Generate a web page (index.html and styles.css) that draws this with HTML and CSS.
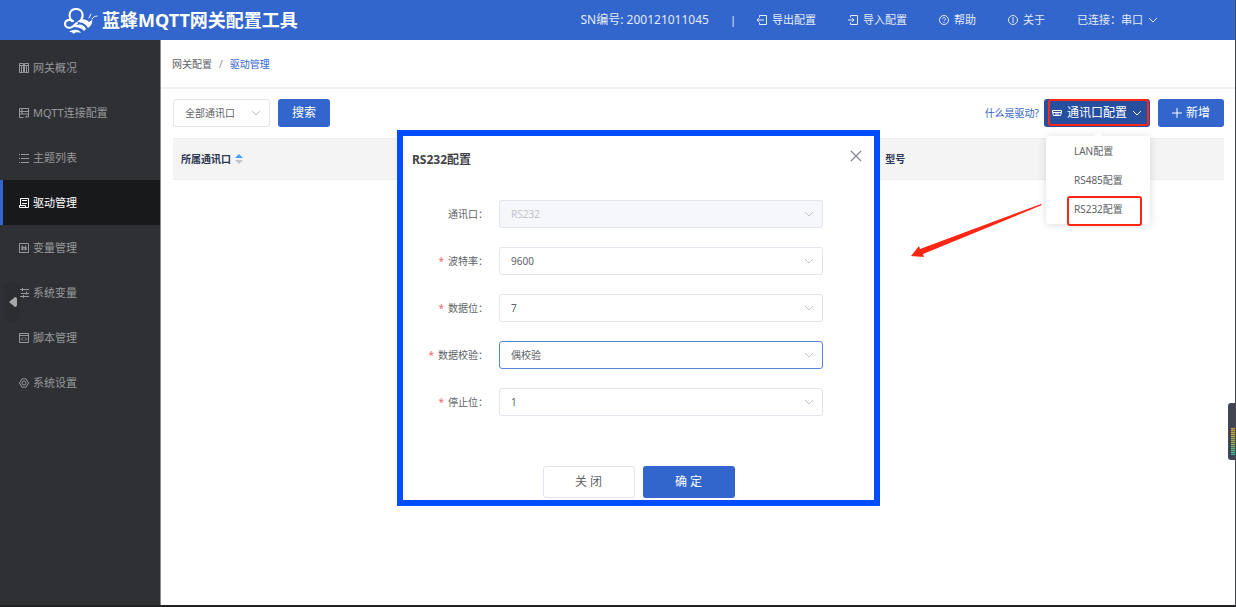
FILE: index.html
```html
<!DOCTYPE html>
<html lang="zh-CN">
<head>
<meta charset="utf-8">
<title>蓝蜂MQTT网关配置工具</title>
<link rel="stylesheet" href="styles.css">
</head>
<body>
<svg class="defs" aria-hidden="true">
  <symbol id="chevron" viewBox="0 0 10 6"><path d="M1 1l4 4 4-4" fill="none" stroke="currentColor"/></symbol>
</svg>
<header class="topbar">
  <div class="brand">
    <svg class="brand-logo" viewBox="0 0 36 28">
      <g fill="none" stroke="#fff" stroke-width="2" stroke-linecap="round">
        <path d="M9 15C5 11 6 3 13 3s8 7 5 11"/>
        <path d="M10 15C6 13 2 14 2 18c0 3 4 5 7 3 2-1 3-3 5-4"/>
        <path d="M26 12l2-4M29 13c1-2 3-3 5-3" stroke-width="1"/>
      </g>
      <g fill="#fff">
        <path d="M14 16c4-4 9-3 12 0 3-1 3-3 3-3 1 4-1 7-4 9-2-4-6-6-11-6z"/>
        <path d="M10 21c5-4 11-3 13 2l-2 2c-2-3-6-4-11-4z"/>
        <path d="M6 26c4-3 10-3 12 1-3-1-5-1-8 1 0-2-2-2-4-2z"/>
      </g>
    </svg>
    <h1 class="brand-name">蓝蜂MQTT网关配置工具</h1>
  </div>
  <nav class="topnav">
    <div class="topnav-serial">
      <span class="serial">SN编号: 200121011045</span>
      <span>|</span>
      <a class="toplink" href="#export"><svg class="icon" viewBox="0 0 10 10"><path d="M2.500 2.500v-2h7v9h-7v-2M0 5h7M2 3L0 5l2 2"/></svg>导出配置</a>
    </div>
    <a class="toplink" href="#import"><svg class="icon" viewBox="0 0 10 10"><path d="M2.500 2.500v-2h7v9h-7v-2M0 5h6M4 3l2 2-2 2"/></svg>导入配置</a>
    <a class="toplink" href="#help"><svg class="icon" viewBox="0 0 10 10"><circle cx="5" cy="5" r="4.500"/><path d="M3.500 4c0-2 3-2 3 0C6.500 5 5 5 5 6M5 7v1"/></svg>帮助</a>
    <a class="toplink" href="#about"><svg class="icon" viewBox="0 0 10 10"><circle cx="5" cy="5" r="4.500"/><path d="M5 2v6"/></svg>关于</a>
    <button class="connection" type="button">已连接：串口<svg class="chevron"><use href="#chevron"/></svg></button>
  </nav>
</header>
<div class="layout">
  <aside class="sidebar">
    <nav class="menu">
      <a class="menu-item" href="#overview"><svg class="icon" viewBox="0 0 10 10"><path d="M.5.5h4v9h-4zM5.500.5h4v9h-4zM0 2.500h10M2.500 3v6M7.500 3v6"/></svg>网关概况</a>
      <a class="menu-item" href="#mqtt"><svg class="icon" viewBox="0 0 10 10"><path d="M.5.5h9v3h-9zM9.500 3v3H.5v-3M.5 6v3.500h4M2 2h2M2 5h2M9.500 6v3h-3M8 7.500L6.500 9"/></svg>MQTT连接配置</a>
      <a class="menu-item" href="#topics"><svg class="icon" viewBox="0 0 10 10"><path d="M0 1.500h1M2 1.500h8M0 5.500h1M2 5.500h8M0 9.500h1M2 9.500h8"/></svg>主题列表</a>
      <a class="menu-item menu-item-active" href="#drivers" aria-current="page"><svg class="icon" viewBox="0 0 10 10"><path d="M1.500 7V.5h8v9H.5v-2h6v2M3 2.500h5M3 5.500h5"/></svg>驱动管理</a>
      <a class="menu-item" href="#variables"><svg class="icon" viewBox="0 0 10 10"><path d="M.5.5h9v9h-9zM3.500 2.500v5M6.500 2.500v5M2 4l6 1M2 6h6"/></svg>变量管理</a>
      <a class="menu-item" href="#system-variables"><svg class="icon" viewBox="0 0 10 10"><path d="M1 1.500h9M2 5.500h8M1 8.500h9M3.500 0v3M7.500 3.500v3M4.500 7v3"/></svg>系统变量</a>
      <a class="menu-item" href="#scripts"><svg class="icon" viewBox="0 0 10 10"><path d="M.5.5h9v9h-9zM0 2.500h10M4 4.500L2.500 6 4 7.500M6 4.500L7.500 6 6 7.500"/></svg>脚本管理</a>
      <a class="menu-item" href="#settings"><svg class="icon" viewBox="0 0 10 10"><path d="M3 .8h4L9.600 5 7 9.200H3L.4 5z"/><circle cx="5" cy="5" r="2"/></svg>系统设置</a>
    </nav>
    <button class="collapse" type="button" aria-label="收起菜单"><svg class="collapse-arrow" viewBox="0 0 8 10"><path d="M0 5l6-5q2 0 2 2v6q0 2-2 2z"/></svg></button>
  </aside>
  <main class="content">
    <nav class="breadcrumb"><a class="crumb" href="#config">网关配置</a><span class="crumb-sep">/</span><a class="crumb crumb-current" href="#drivers">驱动管理</a></nav>
    <div class="toolbar">
      <div class="select-box filter">
        <select class="select" aria-label="通讯口"><option>全部通讯口</option></select>
        <svg class="chevron select-arrow"><use href="#chevron"/></svg>
      </div>
      <button class="btn" type="button">搜索</button>
      <div class="toolbar-right">
        <a class="what-link" href="#what">什么是驱动?</a>
        <div class="port-config">
          <button class="btn btn-open" type="button" aria-expanded="true"><svg class="icon" viewBox="0 0 10 10"><path d="M.5 2.500h9v2l-1 3h-7l-1-3zM1 4.500h8M3 6h4"/></svg>通讯口配置<svg class="chevron"><use href="#chevron"/></svg></button>
          <span class="mark mark-button"></span>
          <ul class="dropdown">
            <li><button class="dropdown-item" type="button">LAN配置</button></li>
            <li><button class="dropdown-item" type="button">RS485配置</button></li>
            <li><button class="dropdown-item" type="button">RS232配置</button></li>
          </ul>
          <span class="mark mark-item"></span>
        </div>
        <button class="btn btn-add" type="button"><svg class="icon" viewBox="0 0 10 10"><path d="M5 0v10M0 5h10"/></svg>新增</button>
      </div>
    </div>
    <table class="table">
      <thead>
        <tr>
          <th class="col-port" scope="col">所属通讯口<svg class="sort" viewBox="0 0 8 10"><path d="M0 4l4-4 4 4z" fill="#409eff"/><path d="M0 6h8l-4 4z" fill="#c0c4cc"/></svg></th>
          <th scope="col">型号</th>
        </tr>
      </thead>
    </table>
  </main>
</div>

<section class="dialog" role="dialog" aria-labelledby="dialog-title">
  <div class="dialog-head">
    <h2 class="dialog-title" id="dialog-title">RS232配置</h2>
    <button class="dialog-close" type="button" aria-label="关闭窗口"><svg class="icon" viewBox="0 0 10 10"><path d="M0 0l10 10M10 0L0 10"/></svg></button>
  </div>
  <form class="form">
    <label class="label" for="port">通讯口：</label>
    <div class="select-box"><select class="select" id="port" disabled><option>RS232</option></select><svg class="chevron select-arrow"><use href="#chevron"/></svg></div>
    <label class="label required" for="baud">波特率：</label>
    <div class="select-box"><select class="select" id="baud"><option>9600</option></select><svg class="chevron select-arrow"><use href="#chevron"/></svg></div>
    <label class="label required" for="data">数据位：</label>
    <div class="select-box"><select class="select" id="data"><option>7</option></select><svg class="chevron select-arrow"><use href="#chevron"/></svg></div>
    <label class="label required" for="parity">数据校验：</label>
    <div class="select-box"><select class="select select-focused" id="parity"><option>偶校验</option></select><svg class="chevron select-arrow"><use href="#chevron"/></svg></div>
    <label class="label required" for="stop">停止位：</label>
    <div class="select-box"><select class="select" id="stop"><option>1</option></select><svg class="chevron select-arrow"><use href="#chevron"/></svg></div>
  </form>
  <div class="dialog-foot">
    <button class="btn btn-large btn-plain" type="button">关 闭</button>
    <button class="btn btn-large" type="button">确 定</button>
  </div>
</section>

<svg class="pointer" viewBox="0 0 132 54" aria-hidden="true"><path d="M130 0L131 1 12 50l1 3-13-1 8-10 1 3z" fill="#ff2615"/></svg>
<div class="meter" aria-hidden="true"><span class="meter-bar"></span></div>
</body>
</html>
```

FILE: styles.css
```css
* { box-sizing: border-box; }

body {
  margin: 0;
  min-height: 100vh;
  display: flex;
  flex-direction: column;
  position: relative;
  border-right: 1px solid #45464a;
  border-bottom: 2px solid #202123;
  background: #fff;
  color: #606266;
  font: 10px/16px "Noto Sans", "Noto Sans CJK SC", sans-serif;
}

a { color: inherit; text-decoration: none; }
button, select { font: inherit; color: inherit; }
button { border: 0; padding: 0; background: none; cursor: pointer; }
h1, h2, ul { margin: 0; padding: 0; }
ul { list-style: none; }

.defs { position: absolute; width: 0; height: 0; }
.icon {
  width: 10px;
  height: 10px;
  flex: none;
  fill: none;
  stroke: currentColor;
  overflow: visible;
}
.chevron { width: 10px; height: 6px; flex: none; }

.topbar {
  height: 40px;
  display: flex;
  align-items: center;
  justify-content: space-between;
  padding: 0 77px 0 63px;
  background: #3266cc;
  color: #e4ebfa;
}
.brand { display: flex; align-items: center; gap: 3px; }
.brand-logo { width: 36px; height: 28px; }
.brand-name { color: #fff; font-size: 18px; line-height: 24px; font-weight: 700; }
.topnav { display: flex; align-items: center; gap: 32px; font-size: 11px; }
.topnav-serial { display: flex; align-items: center; gap: 21px; }
.serial { font-size: 12px; }
.toplink { display: flex; align-items: center; gap: 5px; }
.connection { display: flex; align-items: center; gap: 5px; font-size: 11px; }

.layout { flex: 1; display: flex; }
.sidebar {
  position: relative;
  width: 161px;
  flex: none;
  padding-top: 5px;
  border-right: 1px solid #8b8b8d;
  background: #2f3034;
  color: #97989b;
}
.menu-item {
  display: flex;
  align-items: center;
  gap: 4px;
  height: 45px;
  padding-left: 19px;
  font-size: 11px;
}
.menu-item-active {
  padding-left: 16px;
  border-left: 3px solid #3266cc;
  background: #18191b;
  color: #fff;
}
.collapse {
  position: absolute;
  left: 4px;
  top: 242px;
  width: 16px;
  height: 40px;
  padding-left: 5px;
  border-radius: 4px;
  background: rgb(43 44 47 / 60%);
}
.collapse-arrow { display: block; width: 8px; height: 10px; fill: #a8a8a8; }

.content { flex: 1; min-width: 0; }
.breadcrumb {
  display: flex;
  align-items: center;
  gap: 7px;
  height: 49px;
  padding-left: 11px;
  border-bottom: 2px solid #f0f0f0;
}
.crumb-sep { color: #909399; }
.crumb-current { color: #3266cc; }
.toolbar {
  display: flex;
  align-items: center;
  gap: 8px;
  padding: 10px 11px 11px 12px;
}
.toolbar-right { margin-left: auto; display: flex; align-items: center; }
.what-link { margin-right: 5px; color: #3266cc; }

.select-box { position: relative; }
.filter { width: 97px; }
.select {
  display: block;
  width: 100%;
  height: 28px;
  padding: 0 24px 0 11px;
  border: 1px solid #e2e5ec;
  border-radius: 3px;
  background: #fff;
  appearance: none;
}
.select:disabled { background: #f5f7fa; color: #c0c4cc; opacity: 1; }
.select-focused { border-color: #5b85d6; }
.select-arrow {
  position: absolute;
  right: 9px;
  top: 11px;
  color: #c0c4cc;
  pointer-events: none;
}

.btn {
  display: flex;
  align-items: center;
  justify-content: center;
  gap: 4px;
  height: 28px;
  padding: 0 14px;
  border-radius: 3px;
  background: #3266cc;
  color: #fff;
  font-size: 12px;
}
.btn-open { gap: 5px; padding: 0 8px; background: #264f9f; }
.btn-add { margin-left: 8px; }
.btn-large { width: 92px; height: 32px; }
.btn-plain { border: 1px solid #e2e5ec; background: #fff; color: #606266; }

.port-config { position: relative; }
.dropdown {
  position: absolute;
  top: 37px;
  left: 2px;
  right: 0;
  padding-bottom: 1px;
  border-radius: 3px;
  background: #fff;
  box-shadow: 0 1px 8px rgb(0 0 0 / 14%);
}
.dropdown::before {
  content: "";
  position: absolute;
  left: 46%;
  top: -4px;
  border: 4px solid transparent;
  border-top: 0;
  border-bottom-color: #fff;
}
.dropdown-item { display: block; width: 100%; height: 29px; padding-left: 28px; text-align: left; }
.mark {
  position: absolute;
  border: 2px solid #ff2615;
  border-radius: 3px;
  pointer-events: none;
}
.mark-button { inset: 0 1px 1px 4px; }
.mark-item { left: 23px; right: 8px; top: 97px; height: 30px; }

.table {
  width: calc(100% - 23px);
  margin-left: 12px;
  border-collapse: collapse;
  table-layout: fixed;
  background: #f4f4f4;
  color: #2c3652;
}
.table th {
  height: 41px;
  padding: 0 8px;
  border: 1px solid #ebeef1;
  border-width: 1px 0;
  text-align: left;
  font-weight: 700;
}
.col-port { width: 67%; }
.sort { width: 8px; height: 10px; margin-left: 4px; vertical-align: -1px; }

.dialog {
  position: absolute;
  left: 397px;
  top: 130px;
  width: 483px;
  padding: 14px 9px 2px;
  border: 6px solid #004dff;
  background: #fff;
}
.dialog-head { display: flex; justify-content: space-between; padding-right: 4px; }
.dialog-title { color: #414346; font-size: 12px; line-height: 16px; padding-top: 2px; }
.dialog-close { height: 12px; color: #85888e; }
.dialog-close .icon { display: block; stroke-width: 1.3; }
.form {
  display: grid;
  grid-template-columns: 76px 1fr;
  align-items: center;
  column-gap: 11px;
  row-gap: 19px;
  padding: 32px 42px 50px 0;
}
.label { text-align: right; white-space: nowrap; }
.required::before { content: "*"; margin-right: 4px; color: #f56c6c; }
.dialog-foot { display: flex; justify-content: center; gap: 8px; }

.pointer { position: absolute; left: 911px; top: 204px; width: 132px; height: 54px; }
.meter {
  position: absolute;
  right: -1px;
  top: 403px;
  width: 8px;
  height: 57px;
  padding: 25px 0 0 3px;
  border-radius: 3px 0 0 3px;
  background: #414554;
}
.meter-bar {
  display: block;
  width: 4px;
  height: 27px;
  background:
    repeating-linear-gradient(transparent 0 1px, rgb(65 69 84 / 60%) 1px 2px),
    linear-gradient(#d9a52e, #9db04a, #2fb9a0);
}
```
